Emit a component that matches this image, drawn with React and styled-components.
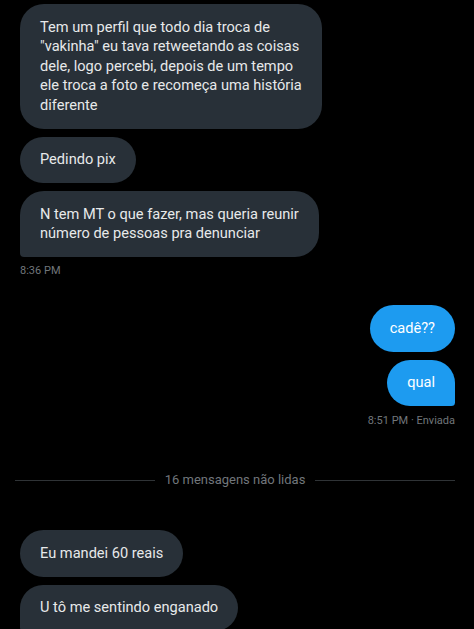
import React from 'react';
import styled, { createGlobalStyle } from 'styled-components';

const colors = {
  black: '#000000',
  bubble: '#283038',
  blue: '#1d9bf0',
  text: '#e7e9ea',
  muted: '#71767b',
  line: '#2f3336',
};

const GlobalStyle = createGlobalStyle`
  html, body {
    margin: 0;
    padding: 0;
    background: ${colors.black};
  }
  body {
    font-family: Roboto, 'Liberation Sans', sans-serif;
    -webkit-font-smoothing: antialiased;
  }
`;

const Screen = styled.main`
  width: 474px;
  height: 629px;
  overflow: hidden;
  background: ${colors.black};
  padding: 4px 19px 0 20px;
  box-sizing: border-box;
  display: flex;
  flex-direction: column;
`;

const Group = styled.section`
  display: flex;
  flex-direction: column;
  align-items: ${(p) => (p.sent ? 'flex-end' : 'flex-start')};
  gap: 8px;
  margin-top: ${(p) => p.top || 0}px;
`;

const Bubble = styled.div`
  box-sizing: border-box;
  padding: 13.5px 20px;
  font-size: 14.6px;
  line-height: 19.5px;
  color: ${(p) => (p.sent ? '#ffffff' : colors.text)};
  background: ${(p) => (p.sent ? colors.blue : colors.bubble)};
  border-radius: 24px;
  ${(p) => p.tail && !p.sent && 'border-bottom-left-radius: 4px;'}
  ${(p) => p.tail && p.sent && 'border-bottom-right-radius: 4px;'}
  white-space: nowrap;
`;

const Stamp = styled.div`
  font-size: 11px;
  line-height: 14px;
  color: ${colors.muted};
  margin-top: ${(p) => (p.sent ? 0 : -1)}px;
`;

const Divider = styled.div`
  display: flex;
  align-items: center;
  gap: 10px;
  margin: 44px 0 0 -5px;
  color: ${colors.muted};
  font-size: 13px;
  line-height: 16px;

  &::before,
  &::after {
    content: '';
    flex: 1;
    height: 1px;
    background: ${colors.line};
  }
`;

export default function App() {
  return (
    <>
      <GlobalStyle />
      <Screen>
        <Group>
          <Bubble>
            Tem um perfil que todo dia troca de<br />
            "vakinha" eu tava retweetando as coisas<br />
            dele, logo percebi, depois de um tempo<br />
            ele troca a foto e recomeça uma história<br />
            diferente
          </Bubble>
          <Bubble>Pedindo pix</Bubble>
          <Bubble tail>
            N tem MT o que fazer, mas queria reunir<br />
            número de pessoas pra denunciar
          </Bubble>
          <Stamp>8:36 PM</Stamp>
        </Group>

        <Group sent top={27}>
          <Bubble sent>cadê??</Bubble>
          <Bubble sent tail>qual</Bubble>
          <Stamp sent>8:51 PM · Enviada</Stamp>
        </Group>

        <Divider>16 mensagens não lidas</Divider>

        <Group top={42}>
          <Bubble>Eu mandei 60 reais</Bubble>
          <Bubble tail>U tô me sentindo enganado</Bubble>
        </Group>
      </Screen>
    </>
  );
}
